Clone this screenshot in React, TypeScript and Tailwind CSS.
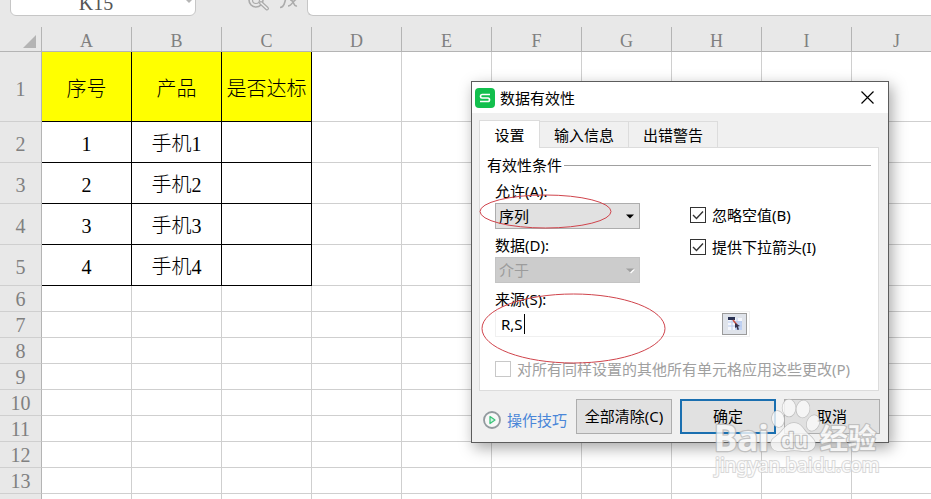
import type { ReactNode } from 'react';

const columns = ['A', 'B', 'C', 'D', 'E', 'F', 'G', 'H', 'I', 'J'];

const rows: string[][] = [
  ['序号', '产品', '是否达标'],
  ['1', '手机1', ''],
  ['2', '手机2', ''],
  ['3', '手机3', ''],
  ['4', '手机4', ''],
  [], [], [], [], [], [], [], [],
];

const serif = "font-['Liberation_Serif','Noto_Sans_CJK_SC',serif]";
const sans = "font-['Noto_Sans','Noto_Sans_CJK_SC',sans-serif]";

function rowHeight(index: number) {
  if (index === 0) return 'h-[70px]';
  return index < 5 ? 'h-[41px]' : 'h-[26px]';
}

function cellStyle(row: number, col: number) {
  if (row > 4 || col > 2) return 'border-[#cfcfcf]';
  return row === 0 ? 'border-black bg-[#ffff00]' : 'border-black';
}

function FormulaBar() {
  return (
    <div className="flex h-4 items-end overflow-hidden pl-2.5 text-[#8a8a8a]">
      <div className="relative flex h-[30px] w-[186px] shrink-0 items-center rounded-md border border-[#c6c6c6] bg-white">
        <input
          aria-label="名称框"
          defaultValue="K15"
          className="w-full bg-transparent pt-1 pr-3.5 text-center text-xl leading-5 text-[#555] outline-none"
        />
        <svg width="12" height="8" viewBox="0 0 12 8" className="absolute right-0" aria-hidden="true">
          <path d="M2 2l4 4 4-4z" fill="#b5b5b5" />
        </svg>
      </div>
      <div className="flex h-full w-[111px] shrink-0 justify-end gap-2 pr-2">
        <svg width="24" height="12" viewBox="0 0 24 12" fill="none" stroke="#ababab" aria-hidden="true">
          <circle cx="9" cy="0" r="7" strokeWidth="1.600" />
          <circle cx="9" cy="0" r="3.500" strokeWidth="1.200" />
          <path d="M14 3l6 5.500" strokeWidth="4" strokeLinecap="round" />
          <path d="M14 3l6 5.500" stroke="#eee" strokeWidth="1.500" strokeLinecap="round" />
        </svg>
        <svg width="20" height="12" viewBox="0 0 20 12" fill="none" stroke="#ababab" strokeWidth="1.600" aria-hidden="true">
          <path d="M1 7.500c3 0 4-2 5-6l1-4M4-1h7M11 0c4-1 3 7 7 6M18-1c-3 0-5 7-9 7" />
        </svg>
      </div>
      <input
        aria-label="编辑栏"
        className="h-[30px] min-w-0 flex-1 rounded-l-md border border-r-0 border-[#c6c6c6] bg-white outline-none"
      />
    </div>
  );
}

function Sheet() {
  return (
    <table className="mt-[11px] w-[942px] table-fixed border-separate border-spacing-0 bg-white text-center text-xl leading-6">
      <colgroup>
        <col className="w-[42px]" />
        {columns.map((c) => (
          <col key={c} className="w-[90px]" />
        ))}
      </colgroup>
      <thead>
        <tr className="h-[25px] bg-[#e8e8e8] text-lg leading-5 text-[#808080]">
          <th className="border-r border-b border-[#b4b4b4] p-0" aria-label="全选">
            <svg width="13" height="13" viewBox="0 0 13 13" className="mt-1 ml-[23px]" aria-hidden="true">
              <path d="M13 0v13H0z" fill="#b4b4b4" />
            </svg>
          </th>
          {columns.map((c) => (
            <th key={c} scope="col" className="border-r border-b border-[#b4b4b4] p-0 pt-1 font-normal">
              {c}
            </th>
          ))}
        </tr>
      </thead>
      <tbody>
        {rows.map((row, r) => (
          <tr key={r} className={rowHeight(r)}>
            <th
              scope="row"
              className={`border-r border-b border-r-[#b4b4b4] border-b-[#cfcfcf] bg-[#e8e8e8] p-0 font-normal text-[#808080] ${row.length > 0 ? 'pt-1' : 'pt-px'}`}
            >
              {r + 1}
            </th>
            {columns.map((c, i) => (
              <td key={c} className={`border-r border-b p-0 font-light whitespace-nowrap text-black ${row.length > 0 ? 'pt-1' : ''} ${cellStyle(r, i)}`}>
                {row[i]}
              </td>
            ))}
          </tr>
        ))}
        <tr className="h-[26px]">
          <td className="border-r border-[#b4b4b4] bg-[#e8e8e8] p-0" />
          {columns.map((c) => (
            <td key={c} className="border-r border-[#cfcfcf] p-0" />
          ))}
        </tr>
      </tbody>
    </table>
  );
}

function Dropdown({ id, label, value, disabled = false }: { id: string; label: string; value: string; disabled?: boolean }) {
  return (
    <div className="flex flex-col gap-0.5">
      <label htmlFor={id} className="h-5">{label}</label>
      <div className="relative">
        <select
          id={id}
          disabled={disabled}
          className="block h-[26px] w-full appearance-none border border-[#adadad] bg-[#e1e1e1] pl-[3px] text-black opacity-100 disabled:border-[#c4c4c4] disabled:bg-[#cccccc] disabled:text-[#9c9c9c]"
        >
          <option>{value}</option>
        </select>
        <svg width="10" height="6" viewBox="0 0 10 6" className="pointer-events-none absolute top-[11px] right-[5px]" aria-hidden="true">
          {disabled && <path d="M2 1.500h8L6 5.500z" fill="#fff" />}
          <path d="M1 .5h8l-4 4z" fill={disabled ? '#a0a0a0' : '#000'} />
        </svg>
      </div>
    </div>
  );
}

function Check({ children, checked = false, disabled = false }: { children: ReactNode; checked?: boolean; disabled?: boolean }) {
  return (
    <label className={`flex h-5 items-center gap-1.5 whitespace-nowrap ${disabled ? 'text-[#a0a0a0]' : ''}`}>
      <span className="relative size-4">
        <input
          type="checkbox"
          defaultChecked={checked}
          disabled={disabled}
          className="block size-4 appearance-none border border-[#333] bg-white disabled:border-[#c8c8c8]"
        />
        {checked && (
          <svg width="16" height="16" viewBox="0 0 16 16" className="pointer-events-none absolute inset-0" aria-hidden="true">
            <path d="M3 8l3.500 3.500L13 4.500" fill="none" stroke="#333" strokeWidth="1.400" />
          </svg>
        )}
      </span>
      {children}
    </label>
  );
}

function ValidationDialog() {
  return (
    <section
      role="dialog"
      aria-label="数据有效性"
      className={`absolute top-[81px] left-[471px] w-[418px] border border-[#5c5c5c] bg-[#f0f0f0] text-[15px] leading-5 text-black shadow-[3px_5px_14px_rgba(0,0,0,0.35)] ${sans}`}
    >
      <header className="flex h-[31px] items-center gap-[5px] bg-white pr-3.5 pl-[3px]">
        <svg width="20" height="20" viewBox="0 0 20 20" aria-hidden="true">
          <rect width="20" height="20" rx="4" fill="#12bf4d" />
          <path d="M15 6.500H7Q5.500 6.500 5.500 8.200T7 10h6q1.500 0 1.500 1.800T13 13.500H5" fill="none" stroke="#fff" strokeWidth="1.700" />
        </svg>
        <h1 className="flex-1">数据有效性</h1>
        <button type="button" aria-label="关闭">
          <svg width="13" height="13" viewBox="0 0 13 13" className="block" aria-hidden="true">
            <path d="M.5.500l12 12M12.500.500l-12 12" stroke="#000" strokeWidth="1.200" />
          </svg>
        </button>
      </header>

      <div className="pt-[7px] pr-[9px] pl-[7px]">
        <div role="tablist" className="flex items-end">
          <button type="button" role="tab" aria-selected="true" className="relative -mb-px h-7 w-[61px] border border-b-0 border-[#dcdcdc] bg-white">
            设置
          </button>
          <button type="button" role="tab" aria-selected="false" className="h-[26px] w-[89px] border-t border-r border-[#dcdcdc]">
            输入信息
          </button>
          <button type="button" role="tab" aria-selected="false" className="h-[26px] w-[89px] border-t border-r border-[#dcdcdc]">
            出错警告
          </button>
        </div>

        <div role="tabpanel" className="border border-[#dcdcdc] bg-white px-[7px] pt-[7px] pb-[11px]">
          <h2 className="flex items-center gap-0.5 after:h-px after:flex-1 after:bg-[#a0a0a0]">有效性条件</h2>
          <div className="pt-1.5 pl-2">
            <div className="flex gap-[50px]">
              <div className="flex w-[145px] flex-col gap-1.5">
                <Dropdown id="allow" label="允许(A):" value="序列" />
                <Dropdown id="data" label="数据(D):" value="介于" disabled />
              </div>
              <div className="flex flex-col gap-3 pt-6">
                <Check checked>忽略空值(B)</Check>
                <Check checked>提供下拉箭头(I)</Check>
              </div>
            </div>
            <label htmlFor="source" className="mt-1.5 block h-5">来源(S):</label>
            <div className="mt-0.5 flex h-[26px] w-[255px] items-center border border-[#f0f0f0] pr-0.5 pl-[5px]">
              <div className="flex min-w-0 flex-1 items-center">
                <input id="source" defaultValue="R,S" className="w-[23px] outline-none" />
                <span className="h-5 w-px bg-black" />
              </div>
              <button type="button" aria-label="选择区域" className="grid h-[22px] w-[25px] place-items-center border border-[#9b9b9b] bg-[#dfe3ea]">
                <svg width="16" height="14" viewBox="0 0 16 14" aria-hidden="true">
                  <path d="M1 1h14v12H1z" fill="#f4f7fd" />
                  <path d="M8 4h7v9H8z" fill="#c0d2f4" />
                  <path d="M1 5h14M1 9h14M5 1v12M10 1v12" stroke="#b9caec" />
                  <path d="M1 0h7v3H1z" fill="#293153" />
                  <path d="M6 3l4 5" stroke="#ca5145" strokeWidth="1.600" />
                  <path d="M8 6l5 3-2 .5 1 3-1.500.500-1-3L8 11z" fill="#35334d" />
                </svg>
              </button>
            </div>
            <div className="mt-[22px]">
              <Check disabled>对所有同样设置的其他所有单元格应用这些更改(P)</Check>
            </div>
          </div>
        </div>
      </div>

      <footer className="flex items-center gap-2 py-2 pr-2 pl-[11px]">
        <a href="#tips" className="mr-auto flex items-center gap-1.5 pt-1.5 whitespace-nowrap text-[#4a86d8]">
          <svg width="18" height="18" viewBox="0 0 18 18" aria-hidden="true">
            <circle cx="9" cy="9" r="8" fill="#f8f8f8" stroke="#929a9e" strokeWidth="1.800" />
            <path d="M7 5.500v7L12 9z" fill="#d6f5e3" stroke="#3cc47c" strokeWidth="1.300" strokeLinejoin="round" />
          </svg>
          操作技巧
        </a>
        <button type="button" className="h-[35px] w-24 shrink-0 border border-[#adadad] bg-[#e1e1e1] pb-0.5 whitespace-nowrap">全部清除(C)</button>
        <button type="button" className="h-[35px] w-24 shrink-0 border-2 border-[#1a6fb0] bg-[#e1e1e1] pb-0.5">确定</button>
        <button type="button" className="h-[35px] w-24 shrink-0 border border-[#adadad] bg-[#e1e1e1] pb-0.5">取消</button>
      </footer>

      <svg width="416" height="360" viewBox="0 0 416 360" className="pointer-events-none absolute top-0 left-0" fill="none" stroke="#d0444c" aria-hidden="true">
        <ellipse cx="73.500" cy="129.500" rx="65.500" ry="16.500" />
        <ellipse cx="101.500" cy="246.500" rx="91.500" ry="34.500" />
      </svg>
    </section>
  );
}

function Watermark() {
  return (
    <svg
      width="172"
      height="84"
      viewBox="0 0 172 84"
      className={`pointer-events-none absolute top-[398px] left-[712px] opacity-80 ${sans}`}
      fill="#fbfbfb"
      stroke="#b8b8b8"
      strokeWidth="1.400"
      paintOrder="stroke"
      aria-hidden="true"
    >
      <ellipse cx="66" cy="21" rx="6" ry="8" transform="rotate(-10 66 21)" />
      <ellipse cx="77" cy="10" rx="6.500" ry="8.500" />
      <ellipse cx="91" cy="11" rx="6.500" ry="8.500" transform="rotate(8 91 11)" />
      <ellipse cx="101" cy="25" rx="6" ry="8" transform="rotate(25 101 25)" />
      <path d="M82 25c7 0 9 6 13 10s9 7 8 12-6 7-13 6c-5-1-10-1-16 0-8 1-14 0-15-6s5-8 9-12 7-10 14-10z" />
      <g fontWeight="700" strokeWidth="2.500" strokeLinejoin="round">
        <text x="2" y="53" fontSize="35">Bai</text>
        <text x="69" y="50" fontSize="21">du</text>
        <text x="108" y="51" fontSize="28">经验</text>
      </g>
      <text x="3" y="74" fontSize="19" stroke="#d0d0d0" strokeWidth="2">jingyan.baidu.com</text>
    </svg>
  );
}

export default function App() {
  return (
    <main className={`relative h-screen overflow-hidden bg-[#e8e8e8] ${serif}`}>
      <FormulaBar />
      <Sheet />
      <ValidationDialog />
      <Watermark />
    </main>
  );
}
